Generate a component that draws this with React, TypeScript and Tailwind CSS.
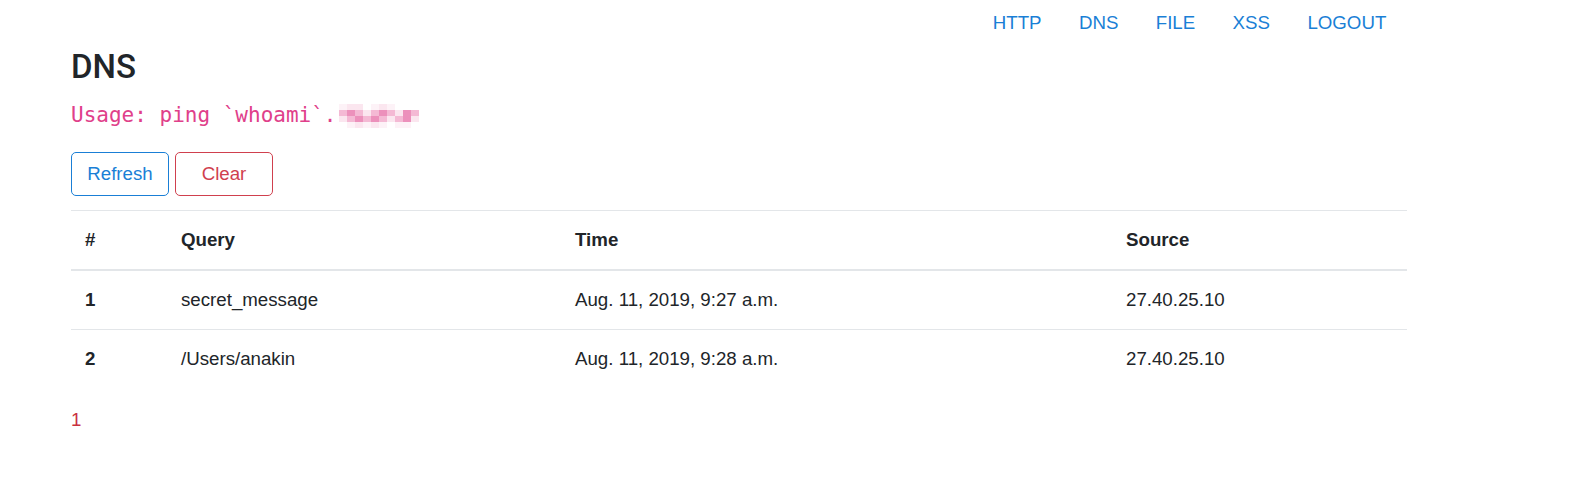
import React from "react";

const L = "bg-[#fbe6ef]";
const M = "bg-[#f4b9d4]";
const D = "bg-[#ec90bb]";
const W = "bg-white";
const F = "bg-[#fdf2f7]";

const mosaic: string[][] = [
  [F, L, L, W, F, L, F, W, W, W],
  [M, D, M, L, M, D, M, L, D, M],
  [L, M, D, M, D, M, L, M, D, L],
  [W, F, L, F, L, F, W, F, F, W],
];

const rows = [
  { n: "1", q: "secret_message", t: "Aug. 11, 2019, 9:27 a.m.", s: "27.40.25.10" },
  { n: "2", q: "/Users/anakin", t: "Aug. 11, 2019, 9:28 a.m.", s: "27.40.25.10" },
];

export default function App() {
  return (
    <div
      className="w-[1576px] h-[499px] bg-white text-[#212529] text-[18.7px] leading-[28px]"
      style={{ fontFamily: '"Liberation Sans", Arial, sans-serif' }}
    >
      <div className="ml-[71px] w-[1336px]">
        <nav className="flex justify-end pr-[2px]">
          {["HTTP", "DNS", "FILE", "XSS", "LOGOUT"].map((n) => (
            <a key={n} className="px-[18.7px] py-[9px] text-[#1a7fd6]">
              {n}
            </a>
          ))}
        </nav>
        <h3
          className="mt-[2px] text-[33px] leading-[37px] font-medium mb-[17px]"
          style={{ fontFamily: "Roboto, 'Liberation Sans', sans-serif" }}
        >
          DNS
        </h3>
        <div
          className="flex items-center h-[26px] text-[21px] text-[#e0408a] leading-[26px]"
          style={{ fontFamily: '"DejaVu Sans Mono", monospace' }}
        >
          <span className="whitespace-pre">Usage: ping `whoami`.</span>
          <span className="inline-grid grid-cols-10 ml-[2px] mt-[2px]">
            {mosaic.flat().map((c, i) => (
              <span key={i} className={`${c} w-[8px] h-[6px]`} />
            ))}
          </span>
        </div>
        <div className="flex gap-[6px] mt-[24px]">
          <button className="w-[98px] h-[44px] border border-[#1a7fd6] text-[#1a7fd6] rounded-[5px]">
            Refresh
          </button>
          <button className="w-[98px] h-[44px] border border-[#d0404e] text-[#d0404e] rounded-[5px]">
            Clear
          </button>
        </div>
        <table className="mt-[14px] w-[1336px] border-collapse text-left">
          <colgroup>
            <col className="w-[96px]" />
            <col className="w-[394px]" />
            <col className="w-[551px]" />
            <col className="w-[295px]" />
          </colgroup>
          <thead>
            <tr>
              {["#", "Query", "Time", "Source"].map((h) => (
                <th
                  key={h}
                  className="px-[14px] py-[15px] font-bold border-t border-b-2 border-[#e3e6e9]"
                >
                  {h}
                </th>
              ))}
            </tr>
          </thead>
          <tbody>
            {rows.map((r) => (
              <tr key={r.n}>
                <th className="px-[14px] py-[15px] font-bold border-t border-[#e3e6e9]">{r.n}</th>
                <td className="px-[14px] py-[15px] border-t border-[#e3e6e9]">{r.q}</td>
                <td className="px-[14px] py-[15px] border-t border-[#e3e6e9]">{r.t}</td>
                <td className="px-[14px] py-[15px] border-t border-[#e3e6e9]">{r.s}</td>
              </tr>
            ))}
          </tbody>
        </table>
        <div className="mt-[18px] text-[#c9303f]">1</div>
      </div>
    </div>
  );
}
